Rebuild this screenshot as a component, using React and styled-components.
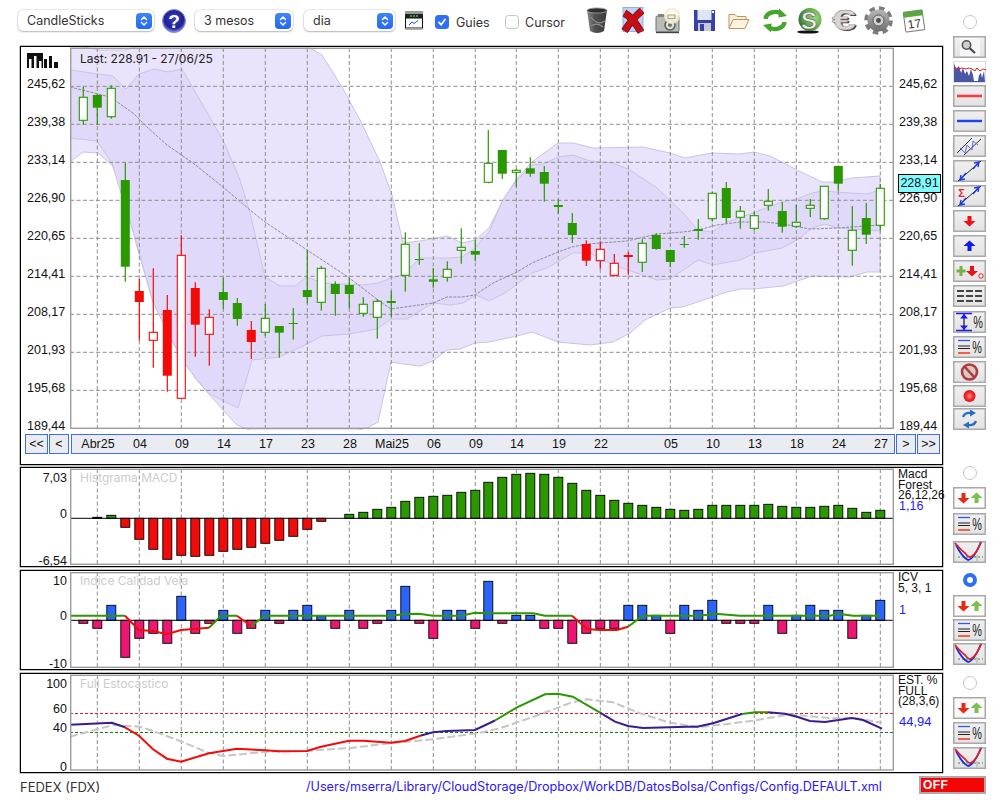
import React from 'react';
import styled, { createGlobalStyle } from 'styled-components';

const GlobalStyle = createGlobalStyle`
  html, body {
    margin: 0;
    padding: 0;
    width: 1000px;
    height: 800px;
    overflow: hidden;
    background: #ffffff;
    font-family: "Liberation Sans", Arial, sans-serif;
    font-size: 12.5px;
    color: #111111;
  }
`;

const GREEN = '#2a9800';
const RED = '#f20b08';
const BLUE = '#2a64fb';
const PINK = '#ef1673';

// x position of a candle / bar on the page
const barX = i => (i <= 28 ? 83.3 + 14 * i : 82.3 + 14 * i);

const GRID_X = [97.3, 139.3, 181.3, 223.3, 265.3, 307.3, 349.3, 391.3, 433.3, 475.3, 516.3, 558.3, 600.3, 628.3, 670.3, 712.3, 754.3, 796.3, 838.3, 880.3];
const GRID_Y = [86.3, 124.3, 162.3, 200.3, 238.3, 276.3, 314.3, 352.3, 390.3];

// wick top, body top, body bottom, wick bottom, type (g filled green, G hollow green, r filled red, R hollow red)
const CANDLES = [
  [86.7, 97.3, 120.3, 124.7, 'G'], [94, 95, 107.7, 125, 'g'], [85.3, 88.3, 116.7, 118.7, 'G'],
  [162.7, 180, 266.7, 281.7, 'g'], [279, 291, 302, 340.7, 'r'], [268.3, 332.3, 340.3, 367.7, 'R'],
  [295, 310, 375.7, 391.7, 'r'], [235.3, 255.3, 398.3, 398.3, 'R'], [282.3, 288, 324.7, 356.7, 'r'],
  [309.3, 317.3, 334.3, 365.7, 'R'], [277.7, 292, 300, 309, 'g'], [298, 303, 319, 325.7, 'g'],
  [321, 330, 342, 359, 'r'], [304, 318.3, 332.3, 335.7, 'G'], [326, 326, 332.7, 357.7, 'g'],
  [308, 323, 324, 339.7, 'g'], [250, 290, 297, 303.3, 'g'], [266, 268.3, 302.3, 310.7, 'G'],
  [281.3, 284, 294, 315.7, 'g'], [278, 285, 294, 308.3, 'g'], [297, 304.3, 313.3, 316.7, 'G'],
  [299, 301.3, 317.3, 338.7, 'G'], [291, 301, 303, 316.7, 'g'], [232.3, 244.3, 275.3, 291.7, 'G'],
  [243.3, 259, 260, 264.7, 'g'], [268, 279.3, 281.7, 287.7, 'g'], [261.3, 269.3, 277.3, 281.7, 'G'],
  [228.3, 247.3, 250.3, 263.7, 'G'], [240, 251, 254.7, 261.3, 'g'], [130, 163.3, 182.3, 183.3, 'G'],
  [150, 150, 173.7, 179, 'g'], [168.7, 170.3, 172.3, 187, 'G'], [157.3, 168.3, 173.7, 176.7, 'g'],
  [166, 172, 183.7, 201.7, 'g'], [199.3, 205, 207, 213.7, 'g'], [213, 223, 235, 243, 'g'],
  [240.3, 244, 260.7, 266, 'r'], [241.3, 249.3, 260.7, 268.7, 'R'], [254, 263.3, 275.3, 276.7, 'R'],
  [252.3, 255, 257, 274.7, 'r'], [239.3, 243.3, 262.3, 272, 'G'], [233.3, 235, 249, 249.7, 'g'],
  [250, 250, 262, 267.3, 'g'], [236, 244, 245, 247.7, 'g'], [219, 229, 231, 239.7, 'g'],
  [192.3, 193.3, 218.7, 221.7, 'G'], [182, 188, 218, 223, 'g'], [206, 211.3, 217.3, 228.7, 'G'],
  [211.7, 215.7, 228.3, 230, 'G'], [189, 201.3, 205.3, 210.7, 'G'], [202, 211, 226.7, 232.7, 'g'],
  [205, 222.3, 226.3, 228, 'G'], [199, 205.3, 208.3, 217, 'G'], [186, 186.3, 218.7, 219.7, 'G'],
  [166, 166, 183.7, 191, 'g'], [206, 230.3, 250.3, 265.7, 'G'], [203, 218, 234.7, 244, 'g'],
  [184, 188.3, 225.3, 230.3, 'G'],
];

const OUTER_BAND = '70,46 83,47 100,50 125,50 135,47 250,40 308,47 322,55 342,87 360,120 380,162 392,195 403,243 420,241 447,236 462,243 475,240 489,228 503,200 517,178 532,162 558,143 573,143 593,148 643,147 670,153 685,158 712,153 740,154 754,152 770,156 797,170 822,182 833,182 852,178 880,176 880,272 867,272 850,277 812,276 783,286 753,289 740,289 727,292 683,307 670,308 645,320 630,333 613,342 590,345 558,342 532,332 517,336 489,342 475,343 460,349 447,350 433,361 420,366 403,364 391,362 378,422 367,428 340,434 260,434 237,425 223,410 208,393 195,378 173,343 153,302 137,247 120,183 112,165 98,153 83,152 70,162';
const INNER_BAND = '70,70 113,76 126,89 139,74 154,69 168,72 182,69 217,130 223,140 240,180 250,213 265,277 280,286 295,286 307,277 322,283 363,285 378,283 391,278 403,275 420,258 450,258 462,257 475,248 489,232 503,200 517,180 532,165 543,164 558,157 573,155 590,161 613,163 630,170 657,188 683,213 698,230 712,232 727,222 753,213 782,202 797,199 812,193 823,191 850,193 867,194 880,190 880,231 838,228 825,224 812,228 797,240 782,248 755,253 740,260 713,265 698,260 670,279 657,280 613,265 590,253 573,253 547,268 532,273 505,293 489,301 476,295 463,303 450,305 433,303 407,319 391,319 377,329 349,334 322,336 307,344 279,357 252,360 238,408 208,393 187,367 173,343 153,302 130,220 120,190 112,163 97,141 70,138';
const AVERAGE_LINE = '70,87 110,97 133,113 148,128 167,145 193,163 223,187 250,210 265,222 307,250 348,277 378,300 391,309 433,303 447,297 462,297 475,295 493,283 517,272 532,263 558,252 572,247 587,244 627,241 657,234 683,232 698,230 717,225 740,222 765,222 783,224 810,229 837,228 880,225';

// top of the bar for values above zero, bottom for values below, by bar index
const MACD = {
  1: 517.3, 2: 515.3, 3: 527.3, 4: 539.3, 5: 549.3, 6: 559.3, 7: 555.3, 8: 556.3, 9: 555.3, 10: 551.3, 11: 549.3,
  12: 547.3, 13: 543.3, 14: 540.3, 15: 536.3, 16: 529.3, 17: 521.3, 19: 514.3, 20: 512.3, 21: 509.3, 22: 507.3,
  23: 501.3, 24: 497.3, 25: 496.3, 26: 495.3, 27: 492.3, 28: 490.3, 29: 482.3, 30: 477.3, 31: 474.3, 32: 473.3,
  33: 474.3, 34: 477.3, 35: 483.3, 36: 490.3, 37: 495.3, 38: 500.3, 39: 503.3, 40: 505.3, 41: 507.3, 42: 509.3,
  43: 510.3, 44: 509.3, 45: 505.3, 46: 505.3, 47: 505.3, 48: 505.3, 49: 504.3, 50: 506.3, 51: 507.3, 52: 507.3,
  53: 506.3, 54: 505.3, 55: 508.3, 56: 512.3, 57: 510.3,
};

const ICV = [
  623.3, 628.3, 605.3, 657.3, 638.3, 633.3, 643.3, 596.3, 633.3, 623.3, 610.3, 633.3, 628.3, 610.3, 623.3, 610.3,
  605.3, 616, 628.3, 610.3, 628.3, 623.3, 610.3, 586.3, 623.3, 638.3, 610.3, 610.3, 628.3, 581.3, 623.3, 615.3,
  615.3, 628.3, 628.3, 643.3, 633.3, 628.3, 628.3, 605.3, 605.3, 615.3, 633.3, 605.3, 610.3, 600.3, 623.3, 623.3,
  623.3, 605.3, 633.3, 615.3, 605.3, 610.3, 610.3, 638.3, 615.3, 600.3,
];

const ICV_LINES = [
  [GREEN, '70,615.7 125,615.7'],
  [RED, '125,615.7 139,630 153,631 167,634.3 181,630 209,627.7'],
  [GREEN, '209,627.7 221,615.7 237,615.7'],
  [RED, '237,615.7 251,626'],
  [GREEN, '251,626 265,615.7 391,615.7 405,614 419,613.7 433,615.7 461,615.7 475,612.7 488,613.3 533,613.3 545,615.7 572,615.7'],
  [RED, '572,615.7 587,629 600,630 617,630 628,626.7'],
  [GREEN, '628,626.7 643,615.7 700,615.7 715,613.7 740,615.7 830,615.7 838,613.7 853,615.7 880,615.7'],
];

const STOCH_LINES = [
  ['#3b1c8f', '70,724.7 112,722.7 125,727.3'],
  [RED, '125,727.3 139,735.7 153,749.3 167,758.7 181,761.7 209,753.3 237,748.7 265,750.3 279,751.3 307,751 321,746.7 349,740.7 363,740.7 391,742.7 405,741 421,735.5'],
  ['#3b1c8f', '421,735.5 433,732.3 447,731 475,730 495,720.5'],
  [GREEN, '495,720.5 517,707.3 545,694.3 558,693.7 572.7,696.7 600,712.7'],
  ['#3b1c8f', '600,712.7 615,721.7 628,726 643,728 687,726.7 697,726.7 713,723.3 742,714'],
  [GREEN, '742,714 755,712.3 768,712.3'],
  ['#3b1c8f', '768,712.3 785,713.7 797,716.7 810,721 825,722 852,718 863,720 882,728.7'],
];
const STOCH_SIGNAL = '70,736.7 97,729.3 113,725 140,726.7 155,731.7 182,741.7 208,752.7 223,756 267,751.7 307,751 353,747.7 392,743 433,739.3 477,733.3 500,728.3 543,713.3 572,702.3 587,699.3 613,702.3 640,713.3 670,722.7 700,727.3 753,720.7 790,714.3 833,718.3 853,717.7 882,722.7';

const DATES = ['Abr25', '04', '09', '14', '17', '23', '28', 'Mai25', '06', '09', '14', '19', '22', '05', '10', '13', '18', '24', '27'];
const PRICES = ['245,62', '239,38', '233,14', '226,90', '220,65', '214,41', '208,17', '201,93', '195,68', '189,44'];

const Page = styled.div`
  width: 1000px;
  height: 800px;
  display: flex;
  flex-direction: column;
  overflow: hidden;
`;

const Row = styled.div`
  display: flex;
  align-items: flex-start;
  padding-left: 20px;
  margin-top: ${props => props.$mt || 0}px;
`;

const MainColumn = styled.div`
  width: 923px;
  flex: none;
`;

const SideColumn = styled.div`
  width: 33px;
  margin-left: 10px;
  flex: none;
  display: flex;
  flex-direction: column;
`;

const Toolbar = styled.div`
  height: 46px;
  margin-left: -2px;
  padding-bottom: 5px;
  box-sizing: border-box;
  display: flex;
  align-items: center;
  font-family: Inter, "Liberation Sans", sans-serif;
  font-size: 12.5px;
  color: #333333;
`;

const Select = styled.div`
  width: ${props => props.$w}px;
  height: 21px;
  margin-left: ${props => props.$ml || 0}px;
  padding: 0 2px 0 9px;
  box-sizing: border-box;
  flex: none;
  display: flex;
  align-items: center;
  justify-content: space-between;
  background: #ffffff;
  border-radius: 5px;
  box-shadow: 0 0 0 0.5px rgba(0, 0, 0, 0.16), 0 1px 2px rgba(0, 0, 0, 0.22);
`;

const Stepper = styled.span`
  width: 16px;
  height: 16px;
  border-radius: 4px;
  background: linear-gradient(#3f84fa, #2468f2);
  display: flex;
  align-items: center;
  justify-content: center;
`;

const Tool = styled.div`
  width: ${props => props.$w}px;
  margin-left: ${props => props.$ml || 0}px;
  margin-top: ${props => props.$mt || 0}px;
  flex: none;
  display: flex;
  align-items: center;
  line-height: 0;
  svg { overflow: visible; }
`;

const Check = styled.span`
  width: 14px;
  height: 14px;
  box-sizing: border-box;
  border-radius: 3.5px;
  flex: none;
  display: flex;
  align-items: center;
  justify-content: center;
  margin-top: 3px;
  background: ${props => (props.$on ? '#2f6ff6' : '#ffffff')};
  border: ${props => (props.$on ? 'none' : '1px solid #c4c4c4')};
`;

const CheckLabel = styled.span`
  width: ${props => props.$w}px;
  margin-left: ${props => props.$ml}px;
  margin-top: 3px;
  flex: none;
`;

const Frame = styled.div`
  width: 923px;
  height: ${props => props.$h}px;
  box-sizing: border-box;
  border: 1px solid #000000;
  box-shadow: 0 0 0 0.4px rgba(0, 0, 0, 0.6);
  position: relative;
  background: #ffffff;
`;

const ChartRow = styled.div`
  display: flex;
  height: ${props => props.$h}px;
`;

const LeftAxis = styled.div`
  width: 49px;
  flex: none;
  box-sizing: border-box;
  padding-top: ${props => props.$pt || 0}px;
  padding-right: 3px;
  text-align: ${props => props.$align || 'right'};
  padding-left: ${props => props.$pl || 0}px;
`;

const Tick = styled.div`
  height: 14px;
  line-height: 14px;
  margin-top: ${props => props.$mt || 0}px;
  white-space: nowrap;
`;

const Plot = styled.svg`
  width: 824px;
  height: ${props => props.$h}px;
  flex: none;
  display: block;
`;

const RightAxis = styled.div`
  width: 49px;
  flex: none;
  box-sizing: border-box;
  padding-top: ${props => props.$pt || 0}px;
  padding-left: 5px;
`;

const Legend = styled.div`
  width: 49px;
  flex: none;
  box-sizing: border-box;
  padding: 1px 0 0 4px;
  font-size: 12px;
  line-height: 10.7px;
  white-space: nowrap;
`;

const LegendValue = styled.div`
  color: #1a1aff;
  font-size: ${props => props.$size || 12.5}px;
  line-height: 10.7px;
  margin-top: ${props => props.$mt || 0}px;
  padding-left: 1px;
`;

const Caption = styled.div`
  position: absolute;
  left: 59px;
  top: ${props => props.$top}px;
  line-height: 14px;
  color: ${props => props.$color || '#222222'};
  font-family: Inter, "Liberation Sans", sans-serif;
  font-size: ${props => props.$size || 12}px;
  white-space: nowrap;
`;

const LastPrice = styled.div`
  position: absolute;
  left: 877px;
  top: 127px;
  width: 43px;
  height: 19px;
  box-sizing: border-box;
  border: 1px solid #000000;
  background: #7ffcff;
  line-height: 17px;
  text-align: center;
`;

const NavRow = styled.div`
  display: flex;
  margin: 4px 0 0 4px;
  height: 20px;
`;

const NavButton = styled.div`
  width: ${props => props.$w}px;
  margin-left: ${props => props.$ml || 0}px;
  box-sizing: border-box;
  flex: none;
  border: 1px solid #3a6ff0;
  background: #ebecf2;
  line-height: 18px;
  text-align: center;
`;

const DateBar = styled.div`
  width: 824px;
  margin-left: 2px;
  box-sizing: border-box;
  flex: none;
  padding-left: 5px;
  display: flex;
  border: 1px solid #3a6ff0;
  background: #ebecf2;
  line-height: 18px;
`;

const DateLabel = styled.span`
  width: 42px;
  flex: none;
  text-align: center;
  margin-left: ${props => props.$ml || 0}px;
`;

const Radio = styled.span`
  width: 14px;
  height: 14px;
  box-sizing: border-box;
  border-radius: 50%;
  align-self: center;
  margin-top: ${props => props.$mt || 0}px;
  background: #ffffff;
  border: ${props => (props.$on ? '4px solid #2a6ff6' : '1px solid #c6c6c6')};
`;

const SideButton = styled.div`
  width: 33px;
  height: 22px;
  flex: none;
  margin-top: ${props => (props.$mt === undefined ? 3 : props.$mt)}px;
  line-height: 0;
  background: ${props => (props.$white ? '#fbfbfb' : 'linear-gradient(#f0f0f0, #e2e2e2)')};
  box-shadow: inset 0 0 0 1.5px #a9a9a9;
`;

const PlainButton = styled(SideButton)`
  background: #ffffff;
  box-shadow: none;
`;

const Footer = styled.div`
  height: 27px;
  padding-left: 20px;
  display: flex;
  align-items: center;
  font-family: Inter, "Liberation Sans", sans-serif;
  font-size: 13px;
`;

const Symbol = styled.div`
  width: 286px;
  flex: none;
  color: #333333;
`;

const ConfigPath = styled.div`
  width: 613px;
  flex: none;
  color: #2a14ff;
  font-size: 12.63px;
  white-space: nowrap;
`;

const OffBadge = styled.div`
  width: 67px;
  height: 18px;
  box-sizing: border-box;
  flex: none;
  align-self: flex-start;
  margin-top: 3px;
  background: #f40606;
  border: 2px solid #ababab;
  color: #ffffff;
  font-family: "Liberation Sans", sans-serif;
  font-weight: bold;
  font-size: 12px;
  line-height: 15px;
  padding-left: 2px;
  letter-spacing: 0.4px;
`;

const Dash = ({ d }) => <path d={d} stroke="#8e8e8e" strokeWidth="1" strokeDasharray="4 2.5" fill="none" />;

const VerticalGrid = ({ top, bottom }) => GRID_X.map(x => <Dash key={x} d={`M${x} ${top}V${bottom}`} />);

const PlotBorder = ({ top, bottom }) => (
  <rect x="70.7" y={top} width="822.6" height={bottom - top} fill="none" stroke="#9c9c9c" strokeWidth="1.4" />
);

const Candle = ({ i, data }) => {
  const [wickTop, bodyTop, bodyBottom, wickBottom, type] = data;
  const x = barX(i);
  const colour = type === 'g' || type === 'G' ? GREEN : RED;
  const hollow = type === 'G' || type === 'R';
  return (
    <g>
      <path d={`M${x} ${wickTop}V${wickBottom}`} stroke={colour} strokeWidth="1.2" />
      {hollow ? (
        <rect x={x - 4} y={bodyTop} width="8" height={bodyBottom - bodyTop} fill="#ffffff" stroke={colour} strokeWidth="1.1" />
      ) : (
        <rect x={x - 4.5} y={bodyTop} width="9" height={bodyBottom - bodyTop} fill={colour} />
      )}
    </g>
  );
};

const Bar = ({ i, y, zero, up, down }) => {
  const above = y < zero;
  return (
    <rect
      x={barX(i) - 4.5}
      y={above ? y : zero}
      width="9"
      height={Math.abs(y - zero)}
      fill={above ? up : down}
      stroke="#000000"
      strokeWidth="0.9"
    />
  );
};

const Chevrons = () => (
  <svg width="10" height="12" viewBox="0 0 10 12" fill="none" stroke="#ffffff" strokeWidth="1.5" strokeLinecap="round" strokeLinejoin="round">
    <path d="M2.5 4.5 5 2l2.5 2.5M2.5 7.5 5 10l2.5-2.5" />
  </svg>
);

const CheckMark = () => (
  <svg width="10" height="10" viewBox="0 0 10 10" fill="none" stroke="#ffffff" strokeWidth="1.8" strokeLinecap="round" strokeLinejoin="round">
    <path d="M2 5.4 4.2 7.8 8 2.4" />
  </svg>
);

const HelpIcon = () => (
  <svg width="24" height="24" viewBox="0 0 24 24">
    <defs>
      <radialGradient id="helpBall" cx="50%" cy="40%" r="60%">
        <stop offset="0" stopColor="#3a3ec8" />
        <stop offset="0.7" stopColor="#1d2190" />
        <stop offset="1" stopColor="#8f93ee" />
      </radialGradient>
    </defs>
    <circle cx="12" cy="12" r="11.5" fill="url(#helpBall)" stroke="#8a8fe0" strokeWidth="1" />
    <text x="12" y="18.5" textAnchor="middle" fontFamily="Liberation Sans" fontWeight="bold" fontSize="19" fill="#ffffff">?</text>
  </svg>
);

const ScreenIcon = () => (
  <svg width="18" height="19" viewBox="0 0 18 19">
    <rect x="0" y="0" width="18" height="3" fill="#9a9a9a" />
    <rect x="0" y="3" width="18" height="4" fill="#222222" />
    <path d="M5 5h8" stroke="#3fc23f" strokeWidth="1.4" strokeDasharray="2 1" />
    <rect x="0.5" y="7" width="17" height="10" fill="#ffffff" stroke="#111111" />
    <path d="M4 14l3-3 2 1.5 4-3" fill="none" stroke="#2a4fe0" />
    <rect x="0" y="17.5" width="18" height="1.5" fill="#b0b0b0" />
  </svg>
);

const TrashIcon = () => (
  <svg width="22" height="27" viewBox="0 0 22 27">
    <defs>
      <linearGradient id="trashBody" x1="0" x2="1" y1="0" y2="0">
        <stop offset="0" stopColor="#8b8b8b" />
        <stop offset="0.4" stopColor="#4f4f4f" />
        <stop offset="1" stopColor="#3b3b3b" />
      </linearGradient>
    </defs>
    <path d="M1 3 4 24q7 4 14 0L21 3z" fill="url(#trashBody)" />
    <path d="M5 10q6 9 14 4M5 19q6-4 12 1" fill="none" stroke="#8e8e8e" strokeWidth="1.2" />
    <ellipse cx="11" cy="3.5" rx="10" ry="2.6" fill="#2f2f2f" stroke="#a5a5a5" strokeWidth="0.8" />
  </svg>
);

const DeleteIcon = () => (
  <svg width="26" height="27" viewBox="0 0 26 27">
    <rect x="3" y="0.5" width="20" height="24" fill="#b9d2f6" stroke="#8fb0e8" />
    <path d="M4.5 6 Q13 11 21 25 M22 3.5 Q12 12 4.5 24" fill="none" stroke="#7d0a0c" strokeWidth="7.4" />
    <path d="M4.5 6 Q13 11 21 25 M22 3.5 Q12 12 4.5 24" fill="none" stroke="#c60f14" strokeWidth="5.8" />
  </svg>
);

const CameraIcon = () => (
  <svg width="27" height="27" viewBox="0 0 27 27">
    <defs>
      <radialGradient id="flashGlow">
        <stop offset="0" stopColor="#ffffff" />
        <stop offset="0.7" stopColor="#fdfbe4" />
        <stop offset="1" stopColor="#e8e6a6" />
      </radialGradient>
    </defs>
    <rect x="1" y="9" width="23" height="16" rx="1.5" fill="#b8bbb6" stroke="#6f726d" />
    <rect x="3" y="7" width="6" height="3" fill="#83867f" />
    <circle cx="15" cy="18" r="5" fill="#d9dcd6" stroke="#5a5c58" strokeWidth="1.5" />
    <circle cx="15" cy="18" r="2" fill="#6f726d" />
    <path d="M1 25.5h23" stroke="#444444" strokeWidth="1.4" />
    <circle cx="17" cy="9" r="8" fill="url(#flashGlow)" opacity="0.85" />
    <rect x="13" y="8" width="7" height="3.5" fill="none" stroke="#a0a08a" />
  </svg>
);

const FloppyIcon = () => (
  <svg width="21" height="21" viewBox="0 0 21 21">
    <rect width="21" height="21" fill="#3740a8" />
    <rect x="3.5" y="0" width="14" height="10" fill="#dbe6f6" />
    <rect x="4" y="13" width="13" height="8" fill="#c9cad2" />
    <rect x="6" y="14" width="4" height="7" fill="#3740a8" />
    <rect x="18" y="1" width="2" height="2" fill="#ffffff" />
  </svg>
);

const FolderIcon = () => (
  <svg width="22" height="18" viewBox="0 0 22 18">
    <path d="M1 16V2.5h6l2 2h9V8" fill="#fbf2dd" stroke="#c4935a" strokeWidth="1" />
    <path d="M1 16.5 5 7.5h16l-4 9z" fill="#fcf4e2" stroke="#c4935a" strokeWidth="1" strokeLinejoin="round" />
  </svg>
);

const RefreshIcon = () => (
  <svg width="24" height="25" viewBox="0 0 24 25">
    <path d="M2.5 11C3 5 12 1.5 19 6" fill="none" stroke="#46a52e" strokeWidth="4.4" />
    <path d="M16 0.5 24 8l-8.5 1.5z" fill="#46a52e" />
    <path d="M21.5 14C21 20 12 23.5 5 19" fill="none" stroke="#46a52e" strokeWidth="4.4" />
    <path d="M8 24.5 0 17l8.5-1.5z" fill="#46a52e" />
  </svg>
);

const SaveMoneyIcon = () => (
  <svg width="26" height="27" viewBox="0 0 26 27">
    <defs>
      <radialGradient id="moneyBall" cx="70%" cy="40%" r="75%">
        <stop offset="0" stopColor="#9fd684" />
        <stop offset="0.6" stopColor="#5da848" />
        <stop offset="1" stopColor="#2c6a24" />
      </radialGradient>
    </defs>
    <ellipse cx="12" cy="25" rx="11" ry="1.6" fill="#111111" />
    <circle cx="14" cy="12.5" r="11.5" fill="url(#moneyBall)" />
    <text x="13" y="21.5" textAnchor="middle" fontFamily="Liberation Sans" fontWeight="bold" fontSize="24" fill="#ececec" stroke="#4a4a4a" strokeWidth="0.5">S</text>
  </svg>
);

const EuroIcon = () => (
  <svg width="25" height="26" viewBox="0 0 25 26">
    <g transform="translate(12.5 23) scale(1.45 1)">
      <text x="0.6" y="0" textAnchor="middle" fontFamily="Liberation Sans" fontWeight="bold" fontSize="30" fill="#4a3a3a">€</text>
      <text x="-0.5" y="-1" textAnchor="middle" fontFamily="Liberation Sans" fontWeight="bold" fontSize="30" fill="#d8d4d4" stroke="#8a8080" strokeWidth="0.4">€</text>
    </g>
  </svg>
);

const GearIcon = () => (
  <svg width="29" height="29" viewBox="0 0 29 29">
    <defs>
      <linearGradient id="gearBody" x1="0" x2="0" y1="0" y2="1">
        <stop offset="0" stopColor="#b8b8b8" />
        <stop offset="1" stopColor="#6e6e6e" />
      </linearGradient>
    </defs>
    <circle cx="14.5" cy="14.5" r="12.2" fill="none" stroke="#7c7c7c" strokeWidth="4.2" strokeDasharray="5.4 4.2" />
    <circle cx="14.5" cy="14.5" r="11" fill="url(#gearBody)" />
    <circle cx="14.5" cy="14.5" r="5.5" fill="#d2d2d2" stroke="#555555" />
    <circle cx="14.5" cy="14.5" r="2.4" fill="#4a4a4a" />
  </svg>
);

const CalendarIcon = () => (
  <svg width="24" height="24" viewBox="0 0 24 24">
    <g transform="rotate(-8 12 12)">
      <rect x="2.5" y="2" width="19" height="20" rx="1" fill="#ffffff" stroke="#777777" />
      <rect x="2.5" y="2" width="19" height="5.5" fill="#59a83c" />
      <text x="12" y="19" textAnchor="middle" fontFamily="Liberation Sans" fontSize="12" fill="#333333">17</text>
    </g>
  </svg>
);

const BarsLogo = () => (
  <svg width="31" height="15" viewBox="0 0 31 15" style={{ display: 'block' }}>
    <rect x="0" y="0" width="16" height="15" fill="#111111" />
    <rect x="2" y="6" width="2.5" height="9" fill="#ffffff" />
    <rect x="7" y="3" width="2.5" height="12" fill="#ffffff" />
    <rect x="12" y="8" width="2.5" height="7" fill="#ffffff" />
    <rect x="17" y="6" width="3" height="9" fill="#111111" />
    <rect x="22" y="3" width="3" height="12" fill="#111111" />
    <rect x="27" y="9" width="4" height="6" fill="#111111" />
  </svg>
);

const Glyph = ({ children }) => (
  <svg width="33" height="22" viewBox="0 0 33 22">{children}</svg>
);

const Arrow = ({ x, dir, fill }) => (
  <path
    d={dir === 'down'
      ? `M${x - 2} 6h4v5h4l-6 5.5-6-5.5h4z`
      : `M${x - 2} 16h4v-5h4l-6-5.5-6 5.5h4z`}
    fill={fill}
  />
);

const Percent = ({ x }) => (
  <text transform={`translate(${x} 17) scale(0.68 1)`} textAnchor="middle" fontFamily="Liberation Sans" fontSize="16" fill="#222222">%</text>
);

const ArrowLines = () => (
  <g fill="none" stroke="#1f3fd8" strokeWidth="1.4">
    <path d="M7 20 13 13M8 15 7 20l5-1" />
    <path d="M26 2 20 9M25 7 26 2l-5 1" />
  </g>
);

const ICONS = {
  search: (
    <Glyph>
      <rect x="7" y="2" width="20" height="18" fill="#f6f6f6" />
      <circle cx="13.5" cy="9" r="4.2" fill="#cfcfcf" stroke="#555555" strokeWidth="1.6" />
      <path d="M16.5 12 22 17" stroke="#444444" strokeWidth="2.2" />
    </Glyph>
  ),
  red: <Glyph><path d="M4 11h25" stroke="#f6b0b0" strokeWidth="4" /><path d="M4 11h25" stroke="#ea3442" strokeWidth="1.8" /></Glyph>,
  blue: <Glyph><path d="M4 11h25" stroke="#b4c8f6" strokeWidth="4" /><path d="M4 11h25" stroke="#1233ee" strokeWidth="1.8" /></Glyph>,
  channel: (
    <Glyph>
      <path d="M4 18 19 3M11 20 28 4" stroke="#333333" strokeWidth="1" />
      <path d="M7 13l5 5 2-8 5 5 1-9 5 4" fill="none" stroke="#5b6ef0" strokeWidth="1" />
    </Glyph>
  ),
  arrows: <Glyph><path d="M5 21 28 1" stroke="#222222" strokeWidth="1" /><ArrowLines /></Glyph>,
  sigma: (
    <Glyph>
      <path d="M5 21 28 1" stroke="#222222" strokeWidth="1" />
      <ArrowLines />
      <text x="8.5" y="12" textAnchor="middle" fontFamily="Liberation Sans" fontWeight="bold" fontSize="11" fill="#e62a2a">Σ</text>
    </Glyph>
  ),
  down: <Glyph><Arrow x={16.5} dir="down" fill="#f01010" /></Glyph>,
  up: <Glyph><Arrow x={16.5} dir="up" fill="#1018f0" /></Glyph>,
  mix: (
    <Glyph>
      <path d="M8 6v10M3.5 11h9" stroke="#74b04a" strokeWidth="3" />
      <Arrow x={19} dir="down" fill="#e81414" />
      <circle cx="28" cy="16" r="2.2" fill="#ffffff" stroke="#e81414" />
    </Glyph>
  ),
  dashes: (
    <Glyph>
      <g stroke="#444444" strokeWidth="2.2">
        <path d="M4 6h7M13 6h7M22 6h7" />
        <path d="M4 11h7M13 11h7M22 11h7" />
        <path d="M4 16h7M13 16h7M22 16h7" />
      </g>
    </Glyph>
  ),
  span: (
    <Glyph>
      <path d="M3 2.5h16M3 19.5h16" stroke="#1a1af0" strokeWidth="1.4" />
      <path d="M11 3v16" stroke="#111111" strokeWidth="1.2" />
      <path d="M7 7.5l4-4.5 4 4.5zM7 14.5l4 4.5 4-4.5z" fill="#1a1af0" />
      <Percent x={25} />
    </Glyph>
  ),
  levels: (
    <Glyph>
      <path d="M5 4.5h12" stroke="#2a5af0" strokeWidth="1.3" />
      <path d="M5 10h12M5 12.5h12" stroke="#222222" strokeWidth="1.2" />
      <path d="M5 17h12" stroke="#f2604e" strokeWidth="2" />
      <Percent x={24} />
    </Glyph>
  ),
  stop: (
    <Glyph>
      <rect x="7" y="1.5" width="19" height="19" fill="#e4e4ea" />
      <circle cx="16.5" cy="11" r="7.5" fill="#d8c8c8" stroke="#b03c3c" strokeWidth="2.6" />
      <path d="M11.5 5.5 21.5 16.5" stroke="#b03c3c" strokeWidth="2.6" />
    </Glyph>
  ),
  ball: (
    <Glyph>
      <defs>
        <radialGradient id="redBall">
          <stop offset="0" stopColor="#ff9a9a" />
          <stop offset="0.6" stopColor="#f62a2a" />
          <stop offset="1" stopColor="#e01010" />
        </radialGradient>
      </defs>
      <circle cx="16.5" cy="11" r="6" fill="url(#redBall)" />
    </Glyph>
  ),
  sync: (
    <Glyph>
      <path d="M10 9q2-5 8-4" fill="none" stroke="#2a6cc8" strokeWidth="2.4" />
      <path d="M17 1.5 23 5l-6 3.5z" fill="#2a6cc8" />
      <path d="M23 13q-2 5-8 4" fill="none" stroke="#2a6cc8" strokeWidth="2.4" />
      <path d="M16 20.5 10 17l6-3.5z" fill="#2a6cc8" />
    </Glyph>
  ),
  pair: (
    <Glyph>
      <Arrow x={10.5} dir="down" fill="#e82a14" />
      <Arrow x={23.5} dir="up" fill="#7cc04e" />
    </Glyph>
  ),
  curves: (
    <Glyph>
      <path d="M5 16h25" stroke="#3a9a2a" strokeWidth="1" strokeDasharray="2 2" />
      <path d="M24 14v6" stroke="#999999" strokeWidth="0.8" />
      <path d="M3 4Q9 16 15 19Q21 18 28 1" fill="none" stroke="#1a2cf0" strokeWidth="1.8" />
      <path d="M2 2Q8 9 12 12Q16 17 18 16Q24 12 28 1" fill="none" stroke="#e02020" strokeWidth="1.8" />
    </Glyph>
  ),
};

const MiniChart = () => (
  <svg width="33" height="22" viewBox="0 0 33 22">
    <rect x="0.5" y="0.5" width="32" height="21" fill="#ffffff" stroke="#dcdcee" />
    <path d="M1 21V2l2 6 3-3 2 7 2-5 2 6 2-3 2 5 2-7 2 6 1 6h4l1-6 2-2 1 5 2-7 1 11z" fill="#4a57a6" />
    <path d="M1 6l4 2 4-1 4 1 3-1 3 1 3 2 2-3 3 3 3-2 3 1" fill="none" stroke="#e81c1c" strokeWidth="1" />
  </svg>
);

const SIDE_BUTTONS = [
  ['search', 7], ['mini', 3], ['red', 2], ['blue', 3], ['channel', 3], ['arrows', 3], ['sigma', 3], ['down', 3],
  ['up', 3], ['mix', 3], ['dashes', 3], ['span', 4], ['levels', 3], ['stop', 3], ['ball', 2], ['sync', 1],
];

const IndicatorButtons = ({ radioTop, on, gaps }) => (
  <SideColumn>
    <Radio $mt={radioTop} $on={on} />
    <SideButton $white $mt={gaps[0]}>{ICONS.pair}</SideButton>
    <SideButton $mt={gaps[1]}>{ICONS.levels}</SideButton>
    <SideButton $mt={gaps[2]}>{ICONS.curves}</SideButton>
  </SideColumn>
);

export default function App() {
  return (
    <Page>
      <GlobalStyle />
      <Row>
        <MainColumn>
          <Toolbar>
            <Select $w={136}>CandleSticks<Stepper><Chevrons /></Stepper></Select>
            <Tool $w={24} $ml={8}><HelpIcon /></Tool>
            <Select $w={98} $ml={9}>3 mesos<Stepper><Chevrons /></Stepper></Select>
            <Select $w={91} $ml={11}>dia<Stepper><Chevrons /></Stepper></Select>
            <Tool $w={18} $ml={10}><ScreenIcon /></Tool>
            <Tool $w={14} $ml={12}><Check $on><CheckMark /></Check></Tool>
            <CheckLabel $w={33} $ml={7}>Guies</CheckLabel>
            <Tool $w={14} $ml={16}><Check /></Tool>
            <CheckLabel $w={41} $ml={6}>Cursor</CheckLabel>
            <Tool $w={22} $ml={20}><TrashIcon /></Tool>
            <Tool $w={26} $ml={12}><DeleteIcon /></Tool>
            <Tool $w={27} $ml={9}><CameraIcon /></Tool>
            <Tool $w={21} $ml={12}><FloppyIcon /></Tool>
            <Tool $w={22} $ml={13}><FolderIcon /></Tool>
            <Tool $w={24} $ml={13}><RefreshIcon /></Tool>
            <Tool $w={26} $ml={9}><SaveMoneyIcon /></Tool>
            <Tool $w={25} $ml={10}><EuroIcon /></Tool>
            <Tool $w={29} $ml={7}><GearIcon /></Tool>
            <Tool $w={24} $ml={9}><CalendarIcon /></Tool>
          </Toolbar>
          <Frame $h={419}>
            <ChartRow $h={383}>
              <LeftAxis $pt={6} $pl={6} $align="left">
                <BarsLogo />
                {PRICES.map((p, i) => <Tick key={p} $mt={i === 0 ? 9 : 24}>{p}</Tick>)}
              </LeftAxis>
              <Plot $h={383} viewBox="70 47 824 383">
                <polygon points={OUTER_BAND} fill="#e9e4fc" stroke="#c9c4e4" />
                <polygon points={INNER_BAND} fill="#e1d9fa" stroke="#c9c4e4" />
                {GRID_Y.map(y => <Dash key={y} d={`M70 ${y}H894`} />)}
                <VerticalGrid top={48} bottom={428} />
                <polyline points={AVERAGE_LINE} fill="none" stroke="#8f8a9c" strokeWidth="1" strokeDasharray="3 1.2" />
                {CANDLES.map((c, i) => <Candle key={i} i={i} data={c} />)}
                <PlotBorder top={48.3} bottom={428.3} />
              </Plot>
              <RightAxis $pt={30}>
                {PRICES.map((p, i) => <Tick key={p} $mt={i === 0 ? 0 : 24}>{p}</Tick>)}
              </RightAxis>
            </ChartRow>
            <NavRow>
              <NavButton $w={23}>&lt;&lt;</NavButton>
              <NavButton $w={20} $ml={1}>&lt;</NavButton>
              <DateBar>
                {DATES.map((d, i) => (
                  <DateLabel key={i} $ml={i === 13 ? 28 : i === 10 ? -1 : 0}>{d}</DateLabel>
                ))}
              </DateBar>
              <NavButton $w={20} $ml={1}>&gt;</NavButton>
              <NavButton $w={23} $ml={1}>&gt;&gt;</NavButton>
            </NavRow>
            <Caption $top={5}>Last: 228.91 - 27/06/25</Caption>
            <LastPrice>228,91</LastPrice>
          </Frame>
        </MainColumn>
        <SideColumn>
          <Radio $mt={15} />
          {SIDE_BUTTONS.map(([name, gap]) => (
            name === 'mini'
              ? <PlainButton key={name} $mt={gap}><MiniChart /></PlainButton>
              : <SideButton key={name} $mt={gap}>{ICONS[name]}</SideButton>
          ))}
        </SideColumn>
      </Row>
      <Row $mt={2}>
        <Frame $h={100}>
          <ChartRow $h={98}>
            <LeftAxis $pt={3}>
              <Tick>7,03</Tick>
              <Tick $mt={22}>0</Tick>
              <Tick $mt={33}>-6,54</Tick>
            </LeftAxis>
            <Plot $h={98} viewBox="70 468 824 98">
              <VerticalGrid top={469} bottom={564} />
              {Object.keys(MACD).map(i => (
                <Bar key={i} i={Number(i)} y={MACD[i]} zero={518.3} up={GREEN} down={RED} />
              ))}
              <path d="M70 518.3H894" stroke="#000000" strokeWidth="1" />
              <PlotBorder top={469.3} bottom={564.3} />
            </Plot>
            <Legend>
              <div>Macd</div>
              <div>Forest</div>
              <div>26,12,26</div>
              <LegendValue>1,16</LegendValue>
            </Legend>
          </ChartRow>
          <Caption $top={3} $color="#cccccc">Histgrama MACD</Caption>
        </Frame>
        <IndicatorButtons radioTop={-1} gaps={[7, 4, 6]} />
      </Row>
      <Row $mt={3}>
        <Frame $h={100}>
          <ChartRow $h={98}>
            <LeftAxis $pt={3}>
              <Tick>10</Tick>
              <Tick $mt={21}>0</Tick>
              <Tick $mt={34}>-10</Tick>
            </LeftAxis>
            <Plot $h={98} viewBox="70 571 824 98">
              <VerticalGrid top={572} bottom={667} />
              {ICV.map((y, i) => <Bar key={i} i={i} y={y} zero={620.3} up={BLUE} down={PINK} />)}
              <path d="M70 620.3H894" stroke="#000000" strokeWidth="1" />
              {ICV_LINES.map(([colour, points], i) => (
                <polyline key={i} points={points} fill="none" stroke={colour} strokeWidth="2" />
              ))}
              <PlotBorder top={572.7} bottom={667.3} />
            </Plot>
            <Legend>
              <div>ICV</div>
              <div>5, 3, 1</div>
              <LegendValue $mt={12}>1</LegendValue>
            </Legend>
          </ChartRow>
          <Caption $top={3} $color="#cccccc">Indice Calidad Vela</Caption>
        </Frame>
        <IndicatorButtons radioTop={3} on gaps={[8, 2, 2]} />
      </Row>
      <Row $mt={3}>
        <Frame $h={100}>
          <ChartRow $h={98}>
            <LeftAxis $pt={3}>
              <Tick>100</Tick>
              <Tick $mt={11}>60</Tick>
              <Tick $mt={5}>40</Tick>
              <Tick $mt={25}>0</Tick>
            </LeftAxis>
            <Plot $h={98} viewBox="70 674 824 98">
              <VerticalGrid top={675} bottom={770} />
              <path d="M70 713.5H894" stroke="#e01818" strokeWidth="1" strokeDasharray="3 2" />
              <path d="M70 732.5H894" stroke="#107a10" strokeWidth="1" strokeDasharray="3 2" />
              <polyline points={STOCH_SIGNAL} fill="none" stroke="#c6c6c6" strokeWidth="2" strokeDasharray="8 3" />
              {STOCH_LINES.map(([colour, points], i) => (
                <polyline key={i} points={points} fill="none" stroke={colour} strokeWidth="2" />
              ))}
              <PlotBorder top={675.3} bottom={770} />
            </Plot>
            <Legend>
              <div>EST. %</div>
              <div>FULL</div>
              <div>(28,3,6)</div>
              <LegendValue $mt={10} $size={13}>44,94</LegendValue>
            </Legend>
          </ChartRow>
          <Caption $top={3} $color="#cccccc">Full Estocástico</Caption>
        </Frame>
        <IndicatorButtons radioTop={3} gaps={[7, 3, 3]} />
      </Row>
      <Footer>
        <Symbol>FEDEX (FDX)</Symbol>
        <ConfigPath>/Users/mserra/Library/CloudStorage/Dropbox/WorkDB/DatosBolsa/Configs/Config.DEFAULT.xml</ConfigPath>
        <OffBadge>OFF</OffBadge>
      </Footer>
    </Page>
  );
}
